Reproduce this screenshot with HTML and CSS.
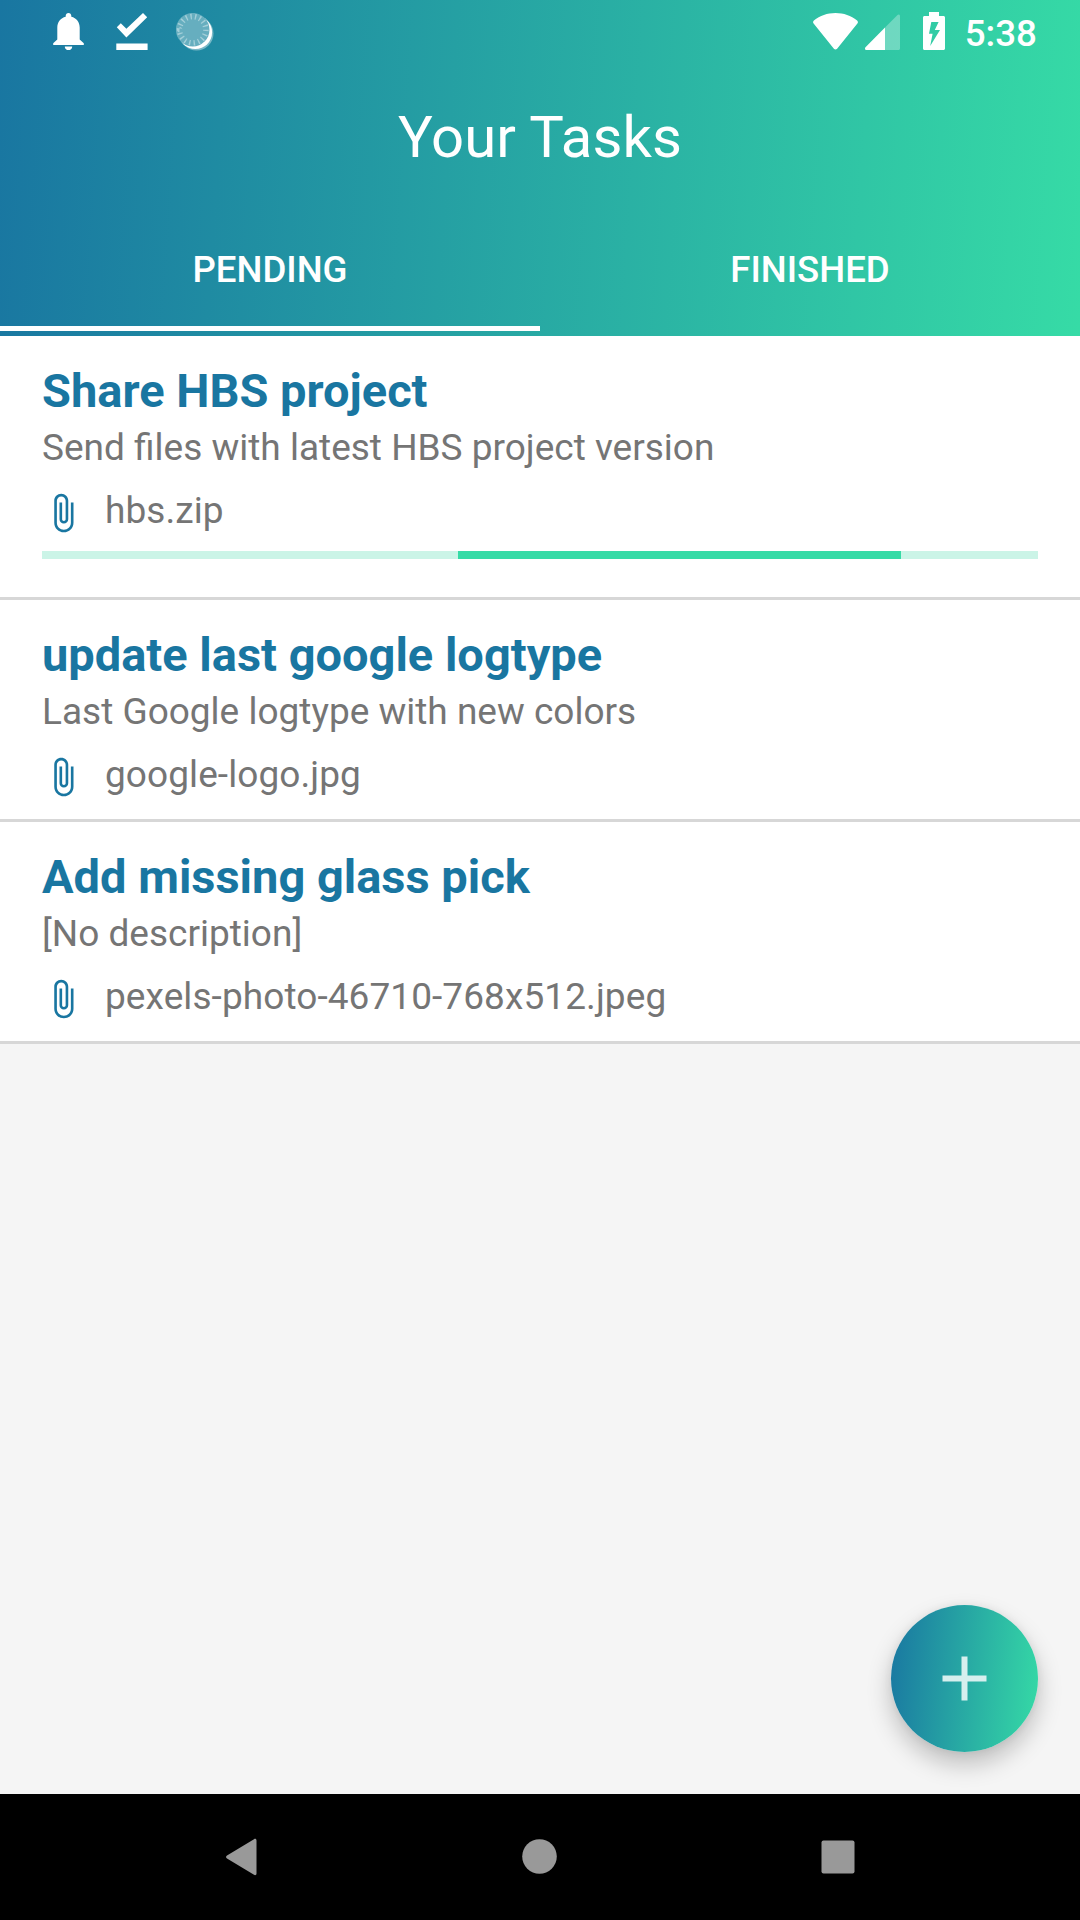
FILE: index.html
```html
<!DOCTYPE html>
<html lang="en">
<head>
<meta charset="utf-8">
<title>Your Tasks</title>
<link rel="stylesheet" href="styles.css">
</head>
<body>
<svg class="sprite" aria-hidden="true">
  <symbol id="clip" viewBox="0 0 24 24"><path d="M16.5 6v11.5c0 2.21-1.79 4-4 4s-4-1.79-4-4V5c0-1.38 1.12-2.5 2.5-2.5s2.5 1.12 2.5 2.5v10.5c0 .55-.45 1-1 1s-1-.45-1-1V6H10v9.5c0 1.38 1.12 2.5 2.5 2.5s2.5-1.12 2.5-2.5V5c0-2.21-1.79-4-4-4S7 2.79 7 5v12.5c0 3.04 2.46 5.5 5.5 5.5s5.5-2.46 5.5-5.5V6h-1.5z"/></symbol>
</svg>
<div class="screen">
  <header class="header">
    <div class="status">
      <div class="status-left">
        <svg width="31" height="37" viewBox="0 0 31 37"><path d="M15.500 0c-1.600 0-2.800 1.200-2.800 2.800v1C7.600 5 4.300 9.200 4.300 14.500v12L.2 30.300V32h30.600v-1.700l-4.100-3.800v-12c0-5.300-3.300-9.500-8.400-10.700v-1C18.300 1.200 17.100 0 15.500 0zM11.800 33.500h7.400c0 2.100-1.600 3.700-3.700 3.700s-3.700-1.600-3.700-3.700z"/></svg>
        <svg width="32" height="37" viewBox="0 0 32 37"><path d="M.3 30.500h31.300V37H.3zM.8 14.200l4-4 5.600 5.600L27 0l4.200 4.200-20.800 20.400z"/></svg>
        <svg width="38" height="38" viewBox="0 0 38 38"><circle cx="20.500" cy="20.500" r="17" fill-opacity=".4"/><circle cx="19.300" cy="19.300" r="16.800"/><circle cx="16.700" cy="16.700" r="16.800" fill="#66aebf"/><circle class="ticks" cx="16.700" cy="16.700" r="13.200" pathLength="180"/></svg>
      </div>
      <div class="status-right">
        <svg class="wifi" width="45" height="37" viewBox="0 0 45 37"><path d="M.4 10.200C-.1 9.500 0 8.200.9 7.500C7 2.700 14.300 0 22.500 0s15.500 2.700 21.600 7.500c.9.700 1 2 .5 2.700L24.100 35.700c-.9 1.100-2.300 1.100-3.200 0z"/></svg>
        <svg class="signal" width="35" height="36" viewBox="0 0 35 36"><path fill-opacity=".3" d="M20 13.500 32.500 1C33.500 0 35 .5 35 2v32.500c0 .8-.7 1.500-1.500 1.500H20z"/><path d="M20 13.500V36H1.500C0 36-.5 34.200.5 33.200z"/></svg>
        <svg class="battery" width="22" height="38" viewBox="0 0 22 38"><path fill-rule="evenodd" d="M6 0h10v4h4.500c.8 0 1.500.7 1.500 1.500v31c0 .8-.7 1.500-1.500 1.500h-19C.7 38 0 37.300 0 36.500v-31C0 4.700.7 4 1.500 4H6zM8.300 10 6 21.700h3.600L7.200 34 17 18h-5.200L15.600 10z"/></svg>
        <span class="time">5:38</span>
      </div>
    </div>
    <h1 class="title">Your Tasks</h1>
    <nav class="tabs">
      <div class="tab active">PENDING</div>
      <div class="tab">FINISHED</div>
    </nav>
  </header>
  <main class="list">
    <article class="task">
      <h2>Share HBS project</h2>
      <p>Send files with latest HBS project version</p>
      <div class="file"><svg><use href="#clip"/></svg><span>hbs.zip</span></div>
      <div class="progress"><div class="bar"></div></div>
    </article>
    <article class="task">
      <h2>update last google logtype</h2>
      <p>Last Google logtype with new colors</p>
      <div class="file"><svg><use href="#clip"/></svg><span>google-logo.jpg</span></div>
    </article>
    <article class="task">
      <h2>Add missing glass pick</h2>
      <p>[No description]</p>
      <div class="file"><svg><use href="#clip"/></svg><span>pexels-photo-46710-768x512.jpeg</span></div>
    </article>
  </main>
  <button class="fab" aria-label="Add task"><svg width="45" height="45" viewBox="0 0 45 45"><path d="M19.500.500h6v19h19v6h-19v19h-6v-19h-19v-6h19z"/></svg></button>
  <footer class="navbar">
    <svg width="36" height="40" viewBox="0 0 36 40"><path d="M4 18.500 31 2.200c1.300-.8 2.500-.1 2.500 1.300v33c0 1.400-1.200 2.100-2.500 1.300L4 21.500c-1.300-.8-1.300-2.200 0-3z"/></svg>
    <svg width="36" height="36" viewBox="0 0 36 36"><circle cx="17.500" cy="17.500" r="17.300"/></svg>
    <svg width="34" height="34" viewBox="0 0 34 34"><rect x=".5" y=".5" width="33" height="33" rx="2"/></svg>
  </footer>
</div>
</body>
</html>
```
FILE: styles.css
```css
* { box-sizing: border-box; margin: 0; padding: 0; }
body { font-family: Roboto, sans-serif; font-size: 37px; color: #757575; }
.sprite { display: none; }
.screen {
  position: relative;
  display: flex;
  flex-direction: column;
  width: 1080px;
  height: 1920px;
  background: #f5f5f5;
}
.header {
  height: 336px;
  color: #fff;
  background: linear-gradient(94deg, #1976a1 0%, #36dba6 100%);
}
.status {
  display: flex;
  justify-content: space-between;
  height: 63px;
  padding: 13px 42px 0 53px;
  fill: #fff;
}
.status-left { display: flex; gap: 32px; }
.status-left svg:last-child { margin-left: -4px; }
.ticks { fill: none; stroke: #a3cfd9; stroke-width: 5.500; stroke-dasharray: 3 7; }
.status-right { display: flex; align-items: flex-start; }
.signal { margin: 1px 0 0 7px; }
.battery { margin: -1px 0 0 23px; }
.time { margin-left: 20px; margin-right: 1px; font-size: 36.750px; font-weight: 500; line-height: 42px; }
.title {
  height: 147px;
  font-size: 58px;
  font-weight: 400;
  letter-spacing: .1px;
  line-height: 148px;
  text-align: center;
}
.tabs { display: flex; height: 126px; }
.tab {
  flex: 1;
  height: 121px;
  padding-top: 38px;
  border-bottom: 5px solid transparent;
  font-size: 36.600px;
  font-weight: 500;
  line-height: 44px;
  text-align: center;
}
.tab.active { border-color: #fff; }
.list { flex: 1; }
.task {
  padding: 25px 42px 14px;
  border-bottom: 3px solid #d7d7d7;
  background: #fff;
}
.task h2 { color: #1976a1; font-size: 47px; font-weight: 700; line-height: 60px; }
.task p { padding-top: 2px; line-height: 50px; }
.file { display: flex; align-items: center; gap: 21px; height: 68px; padding-top: 6px; letter-spacing: .08px; }
.file svg { width: 42px; height: 42px; margin-top: 5px; fill: #1976a1; }
.progress { height: 8px; margin: 10px 0 24px; background: #cbf4e7; }
.bar { width: 443px; height: 8px; margin-left: 416px; background: #36dba6; }
.fab {
  position: absolute;
  top: 1605px;
  left: 891px;
  display: flex;
  align-items: center;
  justify-content: center;
  width: 147px;
  height: 147px;
  border: 0;
  border-radius: 50%;
  background: linear-gradient(96deg, #1976a1, #36dba6);
  box-shadow: 0 12px 24px rgba(0, 0, 0, .23), 0 0 8px rgba(0, 0, 0, .06);
}
.fab svg { fill: #d6efee; }
.navbar {
  display: flex;
  align-items: center;
  justify-content: space-between;
  height: 126px;
  padding: 0 225px 0 223px;
  background: #000;
  fill: #999;
}
```
